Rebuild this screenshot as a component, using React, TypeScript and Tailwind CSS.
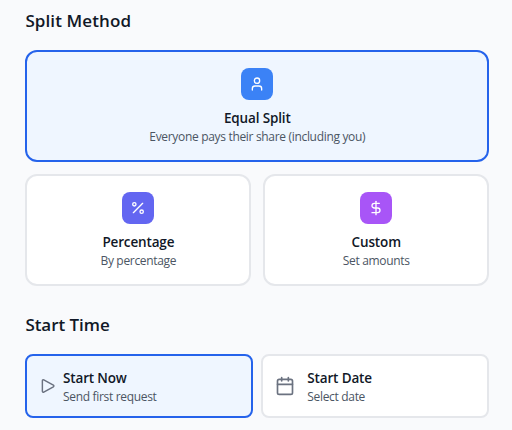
import React from "react";
import { User, Percent, DollarSign, Calendar } from "lucide-react";

type MethodProps = {
  icon: React.ReactNode;
  tint: string;
  title: string;
  note: string;
  box: string;
};

function MethodCard({ icon, tint, title, note, box }: MethodProps) {
  return (
    <button className={`flex h-28 flex-col items-center rounded-xl border-2 pt-4 ${box}`}>
      <span className={`flex h-8 w-8 items-center justify-center rounded-lg text-white ${tint}`}>{icon}</span>
      <span className="mt-2 text-[13.5px] leading-5 font-semibold tracking-[-0.15px] text-[#111827]">{title}</span>
      <span className="mt-px text-[12px] leading-4 tracking-[-0.32px] text-[#4b5563]">{note}</span>
    </button>
  );
}

function TimeLabel({ title, note }: { title: string; note: string }) {
  return (
    <span>
      <span className="block text-[13.5px] leading-5 font-semibold tracking-[-0.15px] text-[#111827]">{title}</span>
      <span className="mt-px block text-[12px] leading-4 tracking-[-0.32px] text-[#4b5563]">{note}</span>
    </span>
  );
}

function PlayIcon() {
  return (
    <svg className="h-5 w-5 shrink-0 text-[#6b7280]" viewBox="0 0 24 24" fill="none" stroke="currentColor" strokeWidth={1.75} strokeLinecap="round" strokeLinejoin="round">
      <path d="M5.25 5.653c0-.856.917-1.398 1.667-.986l11.54 6.347a1.125 1.125 0 0 1 0 1.972l-11.54 6.347a1.125 1.125 0 0 1-1.667-.986V5.653Z" />
    </svg>
  );
}

export default function App() {
  return (
    <main className="h-[430px] w-[512px] overflow-hidden bg-[#f9fafc] pt-[7px] pr-[22.8px] pl-[25.4px] font-['Open_Sans','Noto_Sans',sans-serif]">
      <h2 className="h-7 text-[17px] leading-7 font-semibold tracking-[0.1px] text-[#111827]">Split Method</h2>
      <div className="mt-[15px] grid grid-cols-2 gap-3">
        <MethodCard
          icon={<User size={16} />}
          tint="bg-[#3b82f6]"
          title="Equal Split"
          note="Everyone pays their share (including you)"
          box="col-span-2 border-[#2563eb] bg-[#eff6ff]"
        />
        <MethodCard
          icon={<Percent size={16} />}
          tint="bg-[#6366f1]"
          title="Percentage"
          note="By percentage"
          box="border-[#e5e7eb] bg-white"
        />
        <MethodCard
          icon={<DollarSign size={16} />}
          tint="bg-[#a855f7]"
          title="Custom"
          note="Set amounts"
          box="border-[#e5e7eb] bg-white"
        />
      </div>
      <h2 className="mt-[25px] h-7 text-[17px] leading-7 font-semibold tracking-[-0.05px] text-[#111827]">Start Time</h2>
      <div className="mt-[15px] grid grid-cols-2 gap-2">
        <button className="flex h-16 items-center gap-[5px] rounded-lg border-2 border-[#2563eb] bg-[#eff6ff] px-[10.6px] text-left">
          <PlayIcon />
          <TimeLabel title="Start Now" note="Send first request" />
        </button>
        <button className="flex h-16 items-center gap-3 rounded-lg border-2 border-[#e5e7eb] bg-white px-3 text-left">
          <Calendar className="text-[#6b7280]" size={20} strokeWidth={2} />
          <TimeLabel title="Start Date" note="Select date" />
        </button>
      </div>
    </main>
  );
}
